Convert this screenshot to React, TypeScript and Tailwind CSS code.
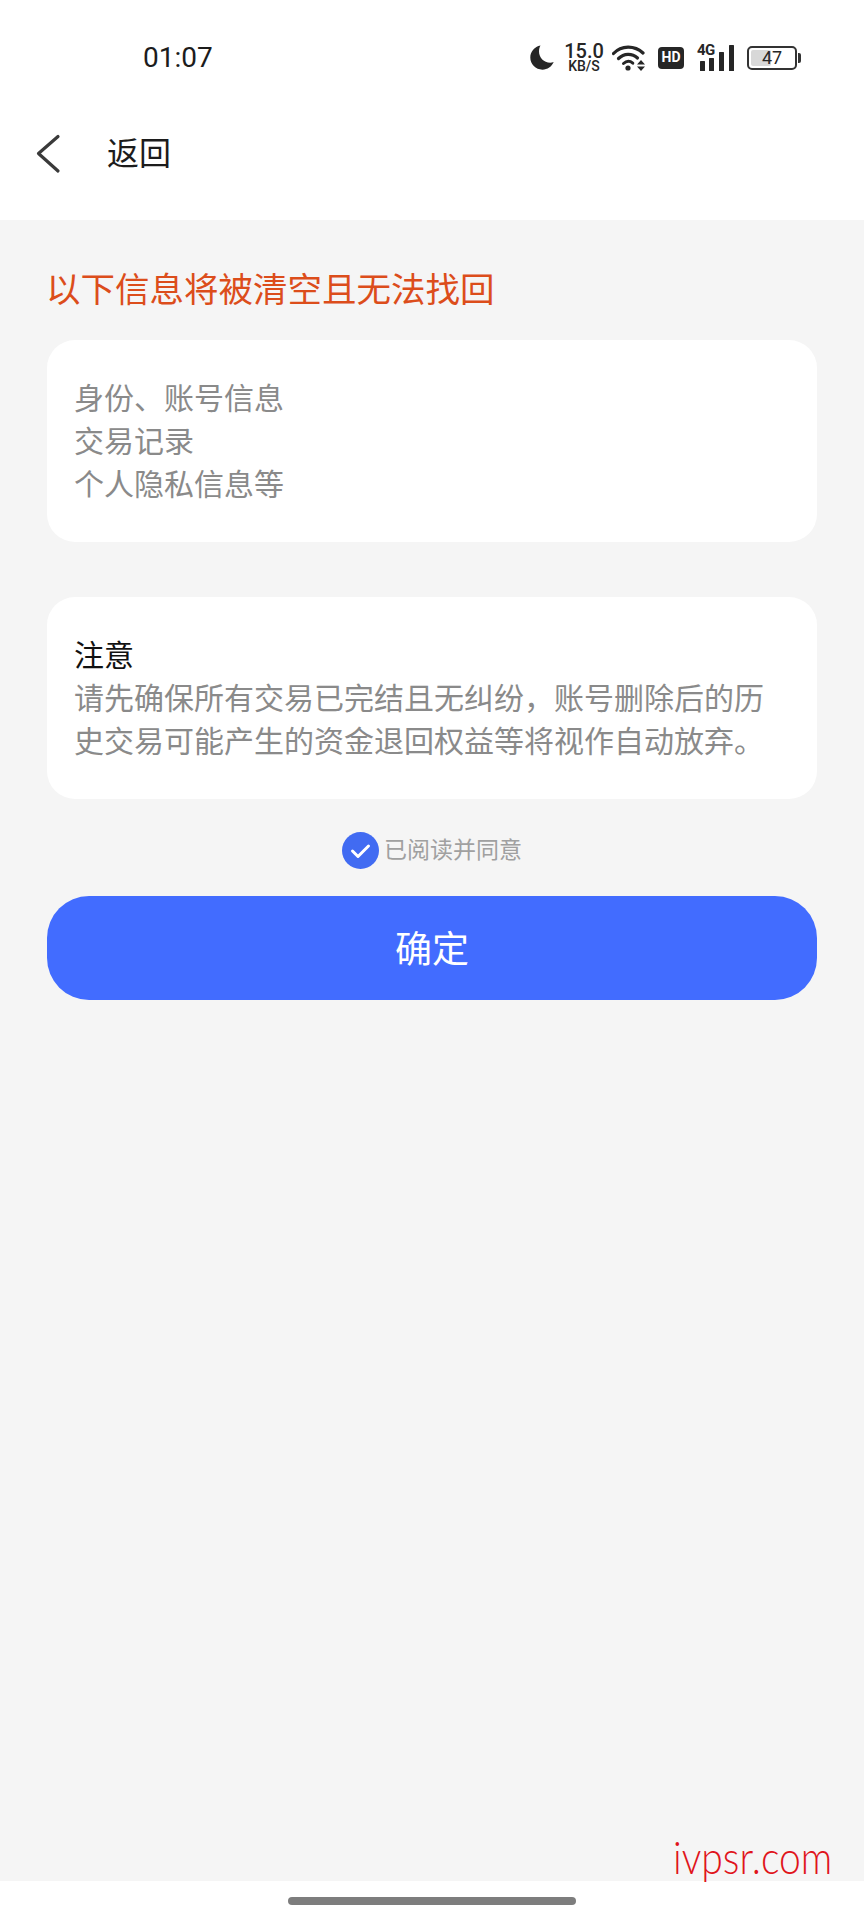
const CJK = "font-['Roboto','Noto_Sans_CJK_SC',sans-serif]";

function MoonIcon() {
  return (
    <svg width="25" height="25" viewBox="0 0 25 25" className="text-[#262626]">
      <path
        fill="currentColor"
        d="M10.5 0.6C4.6 1.7 0.3 6.7 0.3 12.6c0 6.7 5.4 12.1 12.1 12.1 5 0 9.5-3.1 11.3-7.6-1.1 0.4-2.3 0.6-3.5 0.6-6.2 0-11.2-5-11.2-11.2 0-2.1 0.5-4.2 1.5-5.9z"
      />
    </svg>
  );
}

function WifiIcon() {
  return (
    <svg width="34" height="27" viewBox="0 0 34 27" fill="none" className="text-[#262626]">
      <path d="M1.5 9.5C9.5 1 22.5 1 31 9" stroke="currentColor" strokeWidth="3.2" strokeLinecap="round" />
      <path d="M6.5 14.5C12 9 20 9 25.5 14" stroke="currentColor" strokeWidth="3.2" strokeLinecap="round" />
      <path d="M11.5 19.5C14.5 16.8 18 16.8 20.8 19.2" stroke="currentColor" strokeWidth="3" strokeLinecap="round" />
      <circle cx="16" cy="24" r="2.6" fill="currentColor" />
      <path d="M25 20.5h8l-4-4.5zM25 22.5h8l-4 4.5z" fill="currentColor" />
    </svg>
  );
}

function SignalIcon() {
  return (
    <div className="relative h-[27px] w-[38px]">
      <svg width="38" height="27" viewBox="0 0 38 27" className="text-[#262626]">
        <rect x="3" y="17" width="5" height="10" rx="0.5" fill="currentColor" />
        <rect x="12" y="14" width="5" height="13" rx="0.5" fill="currentColor" />
        <rect x="22" y="8" width="5" height="19" rx="0.5" fill="currentColor" />
        <rect x="32" y="1" width="5" height="26" rx="0.5" fill="currentColor" />
      </svg>
      <span className="absolute top-[-2px] left-[0px] text-[15px] leading-[16px] font-bold tracking-[-0.5px] text-[#262626] font-['Roboto',sans-serif]">
        4G
      </span>
    </div>
  );
}

function BatteryIcon() {
  return (
    <div className="flex items-center">
      <div className="flex h-[24px] w-[50px] items-stretch rounded-[5px] border-2 border-[#333333] p-[2px]">
        <div className="relative w-[47%] rounded-[2px] bg-[#d8d8d8]">
          <span className="absolute top-[-2px] left-[11px] text-[18px] leading-[20px] text-[#262626] font-['Roboto',sans-serif]">
            47
          </span>
        </div>
      </div>
      <div className="ml-[1px] h-[10px] w-[3px] rounded-r-[2px] bg-[#333333]" />
    </div>
  );
}

function StatusBar() {
  return (
    <div className="flex h-[90px] items-start pt-[43px] pr-[63px] pl-[143px]">
      <span className="text-[28px] leading-[30px] font-normal text-[#1c1c1c] font-['Roboto',sans-serif]">01:07</span>
      <div className="ml-auto flex items-center">
        <MoonIcon />
        <div className="ml-[10px] flex w-[38px] flex-col items-center font-['Roboto',sans-serif] font-medium text-[#262626]">
          <span className="text-[20px] leading-[17px]">15.0</span>
          <span className="text-[14px] leading-[12px]">KB/S</span>
        </div>
        <div className="ml-[9px]">
          <WifiIcon />
        </div>
        <div className="ml-[12px] flex h-[22px] w-[26px] items-center justify-center rounded-[4px] bg-[#262626] text-[14px] font-bold text-white font-['Roboto',sans-serif]">
          HD
        </div>
        <div className="ml-[13px]">
          <SignalIcon />
        </div>
        <div className="ml-[12px]">
          <BatteryIcon />
        </div>
      </div>
    </div>
  );
}

function Header() {
  return (
    <div className="flex h-[130px] items-center bg-white pb-[2px]">
      <svg width="28" height="42" viewBox="0 0 28 42" fill="none" className="ml-[35px]">
        <path d="M23 3.5 3.5 20.5 23 38" stroke="#3a3a3a" strokeWidth="3.2" strokeLinecap="round" strokeLinejoin="round" />
      </svg>
      <span className="ml-[44px] text-[32px] leading-[42px] text-[#1c1c1c]">返回</span>
    </div>
  );
}

export default function App() {
  return (
    <div className={`relative flex h-[1920px] w-[864px] flex-col overflow-hidden bg-white ${CJK}`}>
      <StatusBar />
      <Header />

      <main className="flex flex-1 flex-col bg-[#f5f5f5] px-[47px]">
        <h1 className="mt-[48px] -ml-[1px] text-[34.5px] leading-[44px] font-normal text-[#dc4d1b]">以下信息将被清空且无法找回</h1>

        {/* what gets wiped */}
        <section className="mt-[28px] flex h-[202px] flex-col justify-center rounded-[28px] bg-white px-[27px] text-[30px] leading-[43px] text-[#8a8a8a]">
          <p>身份、账号信息</p>
          <p>交易记录</p>
          <p>个人隐私信息等</p>
        </section>

        <section className="mt-[55px] flex h-[202px] flex-col justify-center rounded-[28px] bg-white px-[27px] text-[30px] leading-[43px] text-[#8a8a8a]">
          <p className="text-[#111111]">注意</p>
          <p>请先确保所有交易已完结且无纠纷，账号删除后的历</p>
          <p>史交易可能产生的资金退回权益等将视作自动放弃。</p>
        </section>

        <div className="mt-[33px] flex items-center justify-center gap-[5px]">
          <svg width="37" height="37" viewBox="0 0 37 37" fill="none">
            <circle cx="18.5" cy="18.5" r="18.5" fill="#416bf2" />
            <path d="M10.5 19 16 24.5 26.5 14" stroke="white" strokeWidth="3" strokeLinecap="round" strokeLinejoin="round" />
          </svg>
          <span className="text-[23px] leading-[37px] text-[#a0a0a0]">已阅读并同意</span>
        </div>

        <button
          type="button"
          className="mt-[27px] h-[104px] w-full rounded-[42px] bg-[#426cff] pt-[5px] text-[37px] text-white"
        >
          确定
        </button>
      </main>

      <footer className="flex h-[39px] items-center justify-center bg-white">
        <div className="h-[8px] w-[288px] rounded-full bg-[#7d7d7d]" />
      </footer>

      {/* site stamp over the corner */}
      <span className="absolute top-[1830px] left-[673px] origin-left scale-x-[0.85] text-[46px] leading-[54px] font-light text-[#e0141b] font-['Lato',sans-serif]">
        ivpsr.com
      </span>
    </div>
  );
}
